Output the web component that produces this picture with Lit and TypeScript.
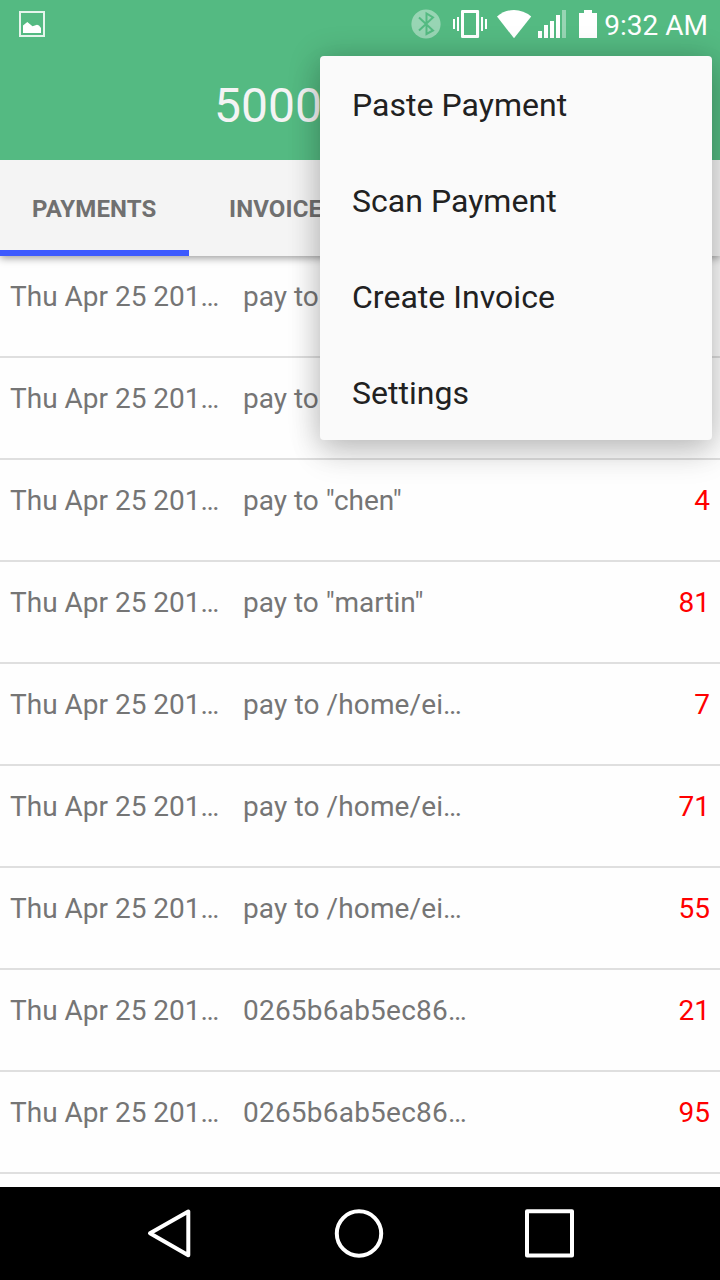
import { LitElement, html, css, svg } from "lit";
import { customElement, property } from "lit/decorators.js";
import { classMap } from "lit/directives/class-map.js";

interface Payment { date: string; label: string; amount: string; }

const DATE = "Thu Apr 25 201…";
const PAYMENTS: Payment[] = [
  { date: DATE, label: "pay to", amount: "" },
  { date: DATE, label: "pay to", amount: "" },
  { date: DATE, label: 'pay to "chen"', amount: "4" },
  { date: DATE, label: 'pay to "martin"', amount: "81" },
  { date: DATE, label: "pay to /home/ei…", amount: "7" },
  { date: DATE, label: "pay to /home/ei…", amount: "71" },
  { date: DATE, label: "pay to /home/ei…", amount: "55" },
  { date: DATE, label: "0265b6ab5ec86…", amount: "21" },
  { date: DATE, label: "0265b6ab5ec86…", amount: "95" },
];

@customElement("status-bar")
class StatusBar extends LitElement {
  static styles = css`
    :host { display: flex; height: 48px; padding: 0 12px 0 19px; align-items: flex-start; color: #fff; }
    svg { display: block; flex: none; }
    .picture { margin-top: 11px; margin-right: auto; }
    .time { font-size: 28px; line-height: 33px; padding-top: 9px; white-space: nowrap; }
    .icons { margin-right: 7px; }
  `;
  render() {
    return html`
      <svg class="picture" width="26" height="26" viewBox="0 0 26 26">
        <rect x="1" y="1" width="24" height="24" fill="none" stroke="#fff" stroke-opacity=".85" stroke-width="2" />
        <path d="M4 22V14.5L8.300 11L13.500 15.300L18 13.700L20 14.500L22 17V22Z" fill="#fff" />
      </svg>
      <svg class="icons" width="187" height="48" viewBox="410 0 187 48" fill="#fff">
        <circle cx="426" cy="24" r="14.600" opacity=".4" />
        <path d="M419 17.500L433 30.500L426.500 34V13.500L433 17.500L419 30.500" fill="none" stroke="#54ba82" stroke-width="2" />
        <path d="M453 19h2v10h-2zM457 17h2v14h-2zM481 17h2v14h-2zM485 19h2v10h-2z" />
        <path fill-rule="evenodd" d="M462.300 10h15.500a1.300 1.300 0 0 1 1.300 1.300v25.400a1.300 1.300 0 0 1-1.300 1.300h-15.500a1.300 1.300 0 0 1-1.300-1.300v-25.400a1.300 1.300 0 0 1 1.300-1.300zM464 13v22h12v-22z" />
        <path d="M497 16.500Q504.500 10 514 10T531.200 16.500L514 38.300Z" />
        <path d="M538 31h4v7h-4zM544 25h4v13h-4zM550 21h4v17h-4zM556 15h4v23h-4z" />
        <path d="M562 10h4v28h-4z" opacity=".4" />
        <path d="M584 10h8v3h5v25h-18v-25h5z" />
      </svg>
      <span class="time">9:32 AM</span>
    `;
  }
}

@customElement("payment-row")
class PaymentRow extends LitElement {
  @property({ attribute: false }) payment!: Payment;
  static styles = css`
    :host {
      display: grid; grid-template-columns: 233px 1fr auto; box-sizing: border-box;
      height: 102px; padding: 24px 10px 0; border-bottom: 2px solid #dfdfdf;
      font-size: 28px; line-height: 33px; color: #757575; white-space: nowrap;
    }
    .path { letter-spacing: .12px; }
    .key { letter-spacing: .22px; }
    .amount { color: #f00; text-align: right; }
  `;
  render() {
    const p = this.payment;
    const kind = { path: p.label.includes("/"), key: p.label.startsWith("0") };
    return html`<span>${p.date}</span><span class=${classMap(kind)}>${p.label}</span><span class="amount">${p.amount}</span>`;
  }
}

@customElement("overflow-menu")
class OverflowMenu extends LitElement {
  static styles = css`
    :host {
      display: block; background: #fafafa; border-radius: 4px; color: #212121;
      box-shadow: 0 16px 32px rgba(0, 0, 0, .12), 0 2px 32px rgba(0, 0, 0, .22);
    }
    .item { height: 96px; padding-left: 32px; font-size: 32px; line-height: 98px; letter-spacing: .03px; }
  `;
  render() {
    return ["Paste Payment", "Scan Payment", "Create Invoice", "Settings"].map(
      (t) => html`<div class="item">${t}</div>`
    );
  }
}

@customElement("nav-bar")
class NavBar extends LitElement {
  static styles = css`
    :host { display: flex; height: 93px; background: #000; }
    svg { display: block; }
  `;
  render() {
    return html`<svg width="720" height="93" viewBox="0 1187 720 93" fill="none" stroke="#fff" stroke-width="4">
      ${svg`<path d="M150 1233.300L188.300 1211.500V1255.300Z" stroke-linejoin="round" />
      <circle cx="359" cy="1233.500" r="22.200" />
      <rect x="527" y="1211.300" width="45" height="44.200" stroke-linejoin="round" />`}
    </svg>`;
  }
}

@customElement("app-root")
class AppRoot extends LitElement {
  static styles = css`
    :host {
      display: flex; flex-direction: column; position: relative; box-sizing: border-box;
      width: 720px; height: 1280px; overflow: hidden; background: #fefefe;
      font-family: Roboto, sans-serif;
    }
    .header { height: 160px; background: #54ba82; flex: none; position: relative; z-index: 2; }
    .title { padding-left: 214px; font-size: 48px; line-height: 56px; padding-top: 30px; color: #f4f4f4; }
    .tabs {
      display: flex; height: 96px; flex: none; background: #f4f4f4; position: relative; z-index: 1;
      box-shadow: 0 2px 8px rgba(0, 0, 0, .4); color: #707070;
      font-size: 24px; font-weight: 700; line-height: 99px; letter-spacing: .12px;
    }
    .tab { box-sizing: border-box; height: 96px; padding: 0 40px; }
    .active { width: 189px; padding: 0 0 0 32px; border-bottom: 6px solid #3d5afe; }
    .list { flex: 1; min-height: 0; overflow: hidden; }
    .menu { position: absolute; z-index: 3; top: 56px; right: 8px; width: 392px; height: 384px; }
    .nav { flex: none; }
  `;
  render() {
    return html`
      <div class="header">
        <status-bar></status-bar>
        <div class="title">5000</div>
      </div>
      <div class="tabs">
        <div class="tab active">PAYMENTS</div>
        <div class="tab">INVOICES</div>
      </div>
      <div class="list">
        ${PAYMENTS.map((p) => html`<payment-row .payment=${p}></payment-row>`)}
      </div>
      <nav-bar class="nav"></nav-bar>
      <overflow-menu class="menu"></overflow-menu>
    `;
  }
}
